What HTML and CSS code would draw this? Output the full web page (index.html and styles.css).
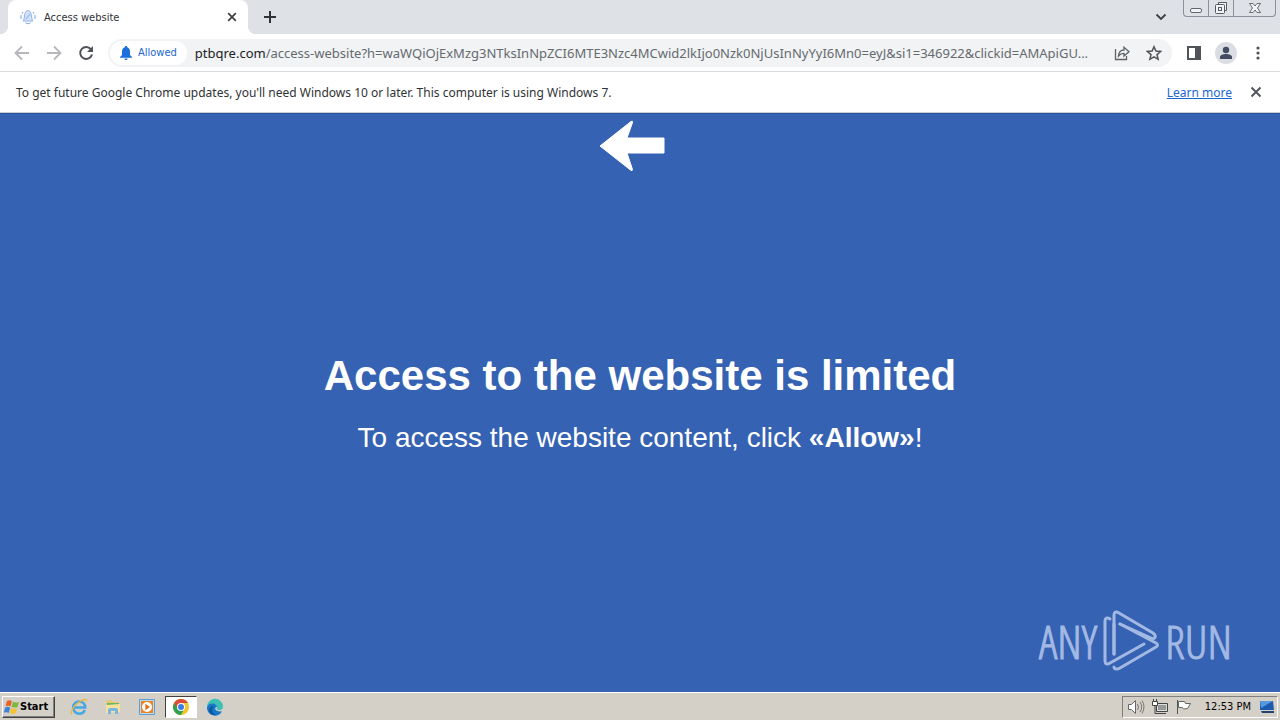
FILE: index.html
```html
<!DOCTYPE html>
<html lang="en">
<head>
	<meta charset="utf-8">
	<title>Access website</title>
	<link rel="stylesheet" href="styles.css">
</head>
<body>
	<div class="tab-strip">
		<div class="tab">
			<svg class="favicon" width="16" height="16" viewBox="0 0 16 16">
				<path d="M3 12c1-1 1-2 1.500-5C5 3 6 2 8 1.500c2 .5 3 1.500 3.500 5.500.5 3 .5 4 1.500 5z" fill="#d5e3fa" stroke="#8fb0ec"/>
				<path d="M5.500 13.500c1 1.500 4 1.500 5 0M1 6v4M15 6v4M3 3L2 4.500M13 3l1 1.500M6 10l4-5" fill="none" stroke="#8fb0ec" stroke-width="1.200"/>
			</svg>
			<span class="tab-title">Access website</span>
			<button class="icon-button tab-close" aria-label="Close tab">
				<svg width="10" height="10" viewBox="0 0 10 10"><path d="M1.200 1.200l7.600 7.600M8.800 1.200L1.200 8.800" stroke="#3c4043" stroke-width="1.700"/></svg>
			</button>
		</div>
		<button class="icon-button new-tab" aria-label="New tab">
			<svg width="14" height="14" viewBox="0 0 14 14"><path d="M7 1v12M1 7h12" stroke="#303236" stroke-width="2"/></svg>
		</button>
		<button class="icon-button tab-search" aria-label="Search tabs">
			<svg width="12" height="8" viewBox="0 0 12 8"><path d="M1.500 1.500L6 6l4.500-4.500" fill="none" stroke="#3c4043" stroke-width="1.800"/></svg>
		</button>
		<div class="window-buttons">
			<button aria-label="Minimize"><svg width="14" height="16" viewBox="0 0 14 16"><rect x="1.500" y="8.500" width="11" height="4" rx="1.500" fill="#f3f4f6" stroke="#63676f"/></svg></button>
			<button aria-label="Restore"><svg width="14" height="16" viewBox="0 0 14 16"><path d="M4.500 4.500v-2h8v8h-2" fill="#f3f4f6" stroke="#555962"/><rect x="1.500" y="4.500" width="9" height="9" rx="1" fill="#f3f4f6" stroke="#555962"/><rect x="4.500" y="7.500" width="3" height="3" fill="none" stroke="#555962"/></svg></button>
			<button class="window-close" aria-label="Close"><svg width="14" height="16" viewBox="0 0 14 16"><path d="M1.500 3.500h3.500l2 2.500 2-2.500h3.500L9.500 8l3 4.500H9L7 10l-2 2.500H1.500l3-4.500z" fill="#f3f4f6" stroke="#686c74"/></svg></button>
		</div>
	</div>

	<div class="toolbar">
		<button class="icon-button nav" aria-label="Back">
			<svg width="16" height="16" viewBox="0 0 16 16"><path d="M15 8H2M8 1.500L1.500 8 8 14.500" fill="none" stroke="#b5b7ba" stroke-width="1.800"/></svg>
		</button>
		<button class="icon-button nav" aria-label="Forward">
			<svg width="16" height="16" viewBox="0 0 16 16"><path d="M1 8h13M8 1.500L14.500 8 8 14.500" fill="none" stroke="#b5b7ba" stroke-width="1.800"/></svg>
		</button>
		<button class="icon-button nav" aria-label="Reload">
			<svg width="16" height="16" viewBox="0 0 16 16"><path d="M13.200 4.600A6 6 0 1 0 14 9.500" fill="none" stroke="#505358" stroke-width="2"/><path d="M15 1v6H9z" fill="#505358"/></svg>
		</button>
		<div class="omnibox">
			<button class="permission-chip">
				<svg width="12" height="14" viewBox="0 0 12 14"><path d="M6 0c.8 0 1.200.5 1.200 1.300C9.300 2 10 3.700 10 5.500V9l2 2v.7H0V11l2-2V5.500c0-1.800.7-3.500 2.800-4.200C4.800.5 5.200 0 6 0zM4.500 12.400h3C7.500 13.400 7 14 6 14s-1.500-.6-1.500-1.600z" fill="#1a6fdc"/></svg>
				Allowed
			</button>
			<div class="url"><span class="url-host">ptbqre.com</span>/access-website?h=waWQiOjExMzg3NTksInNpZCI6MTE3Nzc4MCwid2lkIjo0Nzk0NjUsInNyYyI6Mn0=eyJ&amp;si1=346922&amp;clickid=AMApiGU...</div>
			<button class="icon-button share" aria-label="Share">
				<svg width="16" height="16" viewBox="0 0 16 16"><path d="M1.500 4v10.500h11V11" fill="none" stroke="#606469" stroke-width="1.300"/><path d="M4.500 11c.3-4 2.500-6 5.500-6V2.200l5 4.500-5 4.300V8.300C7.500 8.200 6 9 4.500 11z" fill="none" stroke="#606469" stroke-width="1.300"/></svg>
			</button>
			<button class="icon-button star" aria-label="Bookmark this tab">
				<svg width="16" height="16" viewBox="0 0 16 16"><path d="M8 1.700l1.900 4.400 4.700.4-3.600 3.100 1.100 4.700L8 11.800l-4.100 2.500L5 9.600 1.400 6.500l4.700-.4z" fill="none" stroke="#505358" stroke-width="1.500"/></svg>
			</button>
		</div>
		<button class="icon-button" aria-label="Side panel">
			<svg width="14" height="14" viewBox="0 0 14 14"><path d="M0 0h14v14H0zM2 2v10h6V2z" fill="#505358" fill-rule="evenodd"/></svg>
		</button>
		<button class="icon-button avatar" aria-label="Profile">
			<svg width="14" height="14" viewBox="0 0 14 14"><circle cx="7" cy="4" r="3.200" fill="#454c61"/><path d="M1 13v-2c0-2 3-3 6-3s6 1 6 3v2z" fill="#454c61"/></svg>
		</button>
		<button class="icon-button menu" aria-label="Menu">
			<svg width="4" height="14" viewBox="0 0 4 14"><g fill="#505358"><circle cx="2" cy="2" r="1.600"/><circle cx="2" cy="7" r="1.600"/><circle cx="2" cy="12" r="1.600"/></g></svg>
		</button>
	</div>

	<div class="infobar">
		<span class="infobar-text">To get future Google Chrome updates, you'll need Windows 10 or later. This computer is using Windows 7.</span>
		<a href="#">Learn more</a>
		<button class="icon-button" aria-label="Dismiss">
			<svg width="12" height="12" viewBox="0 0 12 12"><path d="M1.500 1.500l9 9M10.500 1.500l-9 9" stroke="#505358" stroke-width="1.900"/></svg>
		</button>
	</div>

	<main class="page">
		<svg class="arrow" width="66" height="52" viewBox="0 0 66 52"><path d="M1 26L32 1.500q2-1 1.500 1L28 18h37v15H28l5.500 16.500q0 2-2 .5z" fill="#fff" stroke="#fff" stroke-linejoin="round"/></svg>
		<div class="message">
			<h1>Access to the website is limited</h1>
			<p>To access the website content, click <b>«Allow»</b>!</p>
		</div>
		<div class="watermark">
			<span>ANY</span>
			<svg width="56" height="62" viewBox="0 0 56 62"><g fill="none" stroke="#a3b9e4" stroke-width="3" stroke-linejoin="round" stroke-linecap="round"><path d="M7 9C4 7 2 8 2 11v40c0 3 2 4 5 2l34-19"/><path d="M11 44V5c0-3 2-4 5-2l34 20c4 3 2 7-2 5L17 14"/><path d="M11 44V14M17 14l36 19c2 1 2 3 0 4L17 58c-3 2-6 1-6-1"/></g></svg>
			<span>RUN</span>
		</div>
	</main>

	<div class="taskbar">
		<button class="start">
			<svg width="16" height="16" viewBox="0 0 16 16"><path d="M3 2c2-1.300 3-.8 5 .2L6.500 7.500c-2-1-3-1-5-.2z" fill="#e8642a"/><path d="M9 2.800c2 1 4 1 6 .2l-1.500 5c-2 .8-4 .8-6-.2z" fill="#7db93c"/><path d="M1.200 8.500c2-1 3-.8 5 .2L4.700 14c-2-1-3-1-5-.2z" fill="#3f83d6"/><path d="M7.200 9c2 1 4 1 6 .2l-1.500 5c-2 .8-4 .8-6-.2z" fill="#f4c333"/></svg>
			Start
		</button>
		<button class="task" aria-label="Internet Explorer">
			<svg width="18" height="18" viewBox="0 0 18 18"><path d="M14.800 12c-1 2.500-3.300 3.800-5.600 3.800-3.500 0-6-2.800-6-6.300s2.500-6 6-6 6 2.500 6 6H4" fill="none" stroke="#45a8e2" stroke-width="2.600"/><path d="M2 16.500C0 14.500 3 8 9 4c4.500-3 8-3.500 7.500-.5" fill="none" stroke="#e9b93c" stroke-width="1.400"/></svg>
		</button>
		<button class="task" aria-label="Explorer">
			<svg width="18" height="18" viewBox="0 0 18 18"><path d="M2 3l5-1 1 1.500 7 .5v10H2z" fill="#e9c867"/><path d="M3 5h12v3H3z" fill="#69b56c"/><path d="M2 7l14-1v8l-14 1z" fill="#f6e29a"/><path d="M4 16v-4q0-2 2-2h6q2 0 2 2v4h-3v-3H7v3z" fill="#77b7e2"/></svg>
		</button>
		<button class="task" aria-label="Media Player">
			<svg width="18" height="18" viewBox="0 0 18 18"><path d="M1.500 1.500h15v15h-15z" fill="#b8dcf4" stroke="#5a9fd0"/><rect x="3" y="3" width="12" height="12" fill="#ee8122"/><circle cx="9" cy="9" r="5" fill="#fff"/><path d="M7.300 5.800L12 9l-4.700 3.200z" fill="#e87018"/></svg>
		</button>
		<button class="task active" aria-label="Chrome">
			<svg width="18" height="18" viewBox="0 0 18 18"><circle cx="9" cy="9" r="8" fill="#f0c52a"/><path d="M2.070 5A8 8 0 0 0 9 17l3-6H9z" fill="#31a052"/><path d="M2.070 5A8 8 0 0 1 15.930 5H9v4H4.500z" fill="#dc4a38"/><circle cx="9" cy="9" r="4" fill="#fff"/><circle cx="9" cy="9" r="3" fill="#3b7de0"/></svg>
		</button>
		<button class="task" aria-label="Edge">
			<svg width="18" height="18" viewBox="0 0 18 18"><path d="M1 9a8 8 0 0 1 16-.5c0 3-2.500 4-5 3.500-2-.5-1-1.500-1-3 0-2-1.500-3-3.500-3C4.500 6 2 7 1 9z" fill="#3cc0b4"/><path d="M1 9c1-2.500 3-3.500 5.500-3.500S11 7 11 9c-3 0-3 5 5 4.500A8 8 0 0 1 1 9z" fill="#1578c8"/><path d="M8 8c-3 3-2 7 2 9-4 .5-7-2-7-5 0-2.500 2-4 5-4z" fill="#0f589f"/></svg>
		</button>
		<div class="tray">
			<svg width="18" height="16" viewBox="0 0 18 16"><path d="M1.500 5.500h3l4-4v13l-4-4h-3z" fill="#fff" stroke="#666"/><path d="M10.500 5q2 3 0 6M13 3q3.500 5 0 10M15 1.500q4 6 0 13" fill="none" stroke="#777"/></svg>
			<svg width="18" height="16" viewBox="0 0 18 16"><path d="M5.500 4.500h11v8h-11z" fill="#ddd" stroke="#444"/><path d="M7 6h8v5H7z" fill="#999"/><path d="M7 14.500h8M1.500 2.500h5v4h-5zM2.500 0v2M5.500 0v2M4 7v7.500h3" fill="none" stroke="#444"/><path d="M2 3h4v3H2z" fill="#fff"/></svg>
			<svg width="18" height="16" viewBox="0 0 18 16"><path d="M2.500 1v14" stroke="#555"/><path d="M3.500 2.500h6l1 2h5l-3 5-4 .5-1-1.500h-4z" fill="#fff" stroke="#666"/></svg>
			<time>12:53 PM</time>
			<svg width="16" height="14" viewBox="0 0 16 14"><path d="M1 1h13l1 9H1z" fill="#1d5aae"/><path d="M1 1h13l-12 7z" fill="#5799df"/><path d="M2 11h13v2H3z" fill="#26436d"/></svg>
		</div>
	</div>
</body>
</html>
```
FILE: styles.css
```css
* {
	box-sizing: border-box;
}

body {
	display: flex;
	flex-direction: column;
	min-height: 100vh;
	margin: 0;
	background: #fff;
	font-family: "DejaVu Sans Condensed", Tahoma, sans-serif;
	font-size: 11px;
	color: #303236;
}

button {
	padding: 0;
	border: 0;
	background: none;
	font: inherit;
	color: inherit;
}

svg {
	display: block;
	flex: none;
}

.icon-button {
	display: flex;
	align-items: center;
	justify-content: center;
	flex: none;
	width: 16px;
	height: 16px;
}

/* tabs */
.tab-strip {
	display: flex;
	height: 34px;
	background: #dee1e6;
}

.tab {
	position: relative;
	display: flex;
	align-items: center;
	width: 240px;
	margin-left: 8px;
	padding: 0 8px 0 12px;
	border-radius: 8px 8px 0 0;
	background: #fff;
}

.tab::before,
.tab::after {
	content: "";
	position: absolute;
	bottom: 0;
	width: 8px;
	height: 8px;
}

.tab::before {
	left: -8px;
	background: radial-gradient(circle at 0 0, #dee1e6 8px, #fff 8px);
}

.tab::after {
	right: -8px;
	background: radial-gradient(circle at 100% 0, #dee1e6 8px, #fff 8px);
}

.tab-title {
	flex: 1;
	margin-left: 8px;
}

.new-tab {
	align-self: center;
	margin-left: 14px;
}

.tab-search {
	align-self: center;
	margin-left: auto;
	margin-right: 14px;
}

.window-buttons {
	display: flex;
	height: 17px;
	margin-right: 4px;
	border: 1px solid #8b909b;
	border-top: 0;
	border-radius: 0 0 4px 4px;
}

.window-buttons button {
	display: flex;
	justify-content: center;
	width: 25px;
	border-right: 1px solid #8b909b;
}

.window-buttons .window-close {
	width: 41px;
	border-right: 0;
}

/* toolbar */
.toolbar {
	display: flex;
	align-items: center;
	gap: 16px;
	height: 38px;
	padding: 0 14px;
	border-bottom: 1px solid #d9dbde;
}

.omnibox {
	display: flex;
	align-items: center;
	flex: 1;
	min-width: 0;
	height: 28px;
	margin-left: -2px;
	margin-right: -2px;
	padding: 0 10px 0 2px;
	border-radius: 14px;
	background: #f1f3f4;
}

.permission-chip {
	display: flex;
	align-items: center;
	gap: 6px;
	flex: none;
	height: 24px;
	padding: 0 10px;
	border-radius: 12px;
	background: #fff;
	color: #1967d2;
}

.url {
	flex: 1;
	min-width: 0;
	margin-left: 8px;
	white-space: nowrap;
	font-family: "Noto Sans", "Open Sans", sans-serif;
	font-size: 13px;
	color: #666a6f;
}

.url-host {
	color: #202124;
}

.share {
	margin-right: 16px;
}

.avatar {
	width: 22px;
	height: 22px;
	margin: 0 -3px;
	border-radius: 50%;
	background: #dadde4;
}

/* infobar */
.infobar {
	display: flex;
	align-items: center;
	min-height: 41px;
	padding: 0 16px;
	border-bottom: 1px solid #c9ced6;
	font-family: "Noto Sans", "Open Sans", sans-serif;
	font-size: 12px;
}

.infobar-text {
	flex: 1;
}

.infobar a {
	margin-right: 16px;
	color: #1967d2;
}

/* page */
.page {
	position: relative;
	display: flex;
	align-items: center;
	justify-content: center;
	flex: 1;
	padding-top: 2px;
	border-top: 1px solid #2b5798;
	background: #3562b2;
	font-family: "Liberation Sans", Arial, sans-serif;
	color: #fff;
}

.arrow {
	position: absolute;
	top: 6px;
	left: calc(50% - 41px);
}

.message {
	text-align: center;
}

.message h1 {
	margin: 0;
	font-size: 42px;
	line-height: 48px;
}

.message p {
	margin: 20px 0 0;
	font-size: 28px;
	line-height: 36px;
}

.watermark {
	position: absolute;
	right: 48px;
	bottom: 20px;
	display: flex;
	align-items: center;
	gap: 6px;
	font-family: "Open Sans Condensed Light", "Roboto Condensed Light", "Open Sans Condensed", sans-serif;
	font-size: 46px;
	font-weight: 300;
	line-height: 62px;
	color: #a3b9e4;
	-webkit-text-stroke: 1px #a3b9e4;
}

/* taskbar */
.taskbar {
	display: flex;
	align-items: center;
	height: 28px;
	padding: 0 2px;
	border-top: 1px solid #fff;
	background: #d4d0c8;
	color: #000;
}

.start {
	display: flex;
	align-items: center;
	width: 53px;
	height: 22px;
	margin-right: 8px;
	padding-left: 1px;
	border: 1px solid;
	border-color: #fff #404040 #404040 #fff;
	box-shadow: inset -1px -1px #808080;
	font-weight: bold;
}

.task {
	display: flex;
	align-items: center;
	justify-content: center;
	width: 32px;
	height: 22px;
	margin-right: 2px;
}

.task.active {
	border: 1px solid;
	border-color: #404040 #fff #fff #404040;
	background: #fff;
}

.tray {
	display: flex;
	align-items: center;
	gap: 6px;
	height: 22px;
	margin-left: auto;
	padding: 0 2px 0 4px;
	border: 1px solid;
	border-color: #808080 #fff #fff #808080;
}

.tray time {
	margin: 0 2px 0 6px;
}
```
